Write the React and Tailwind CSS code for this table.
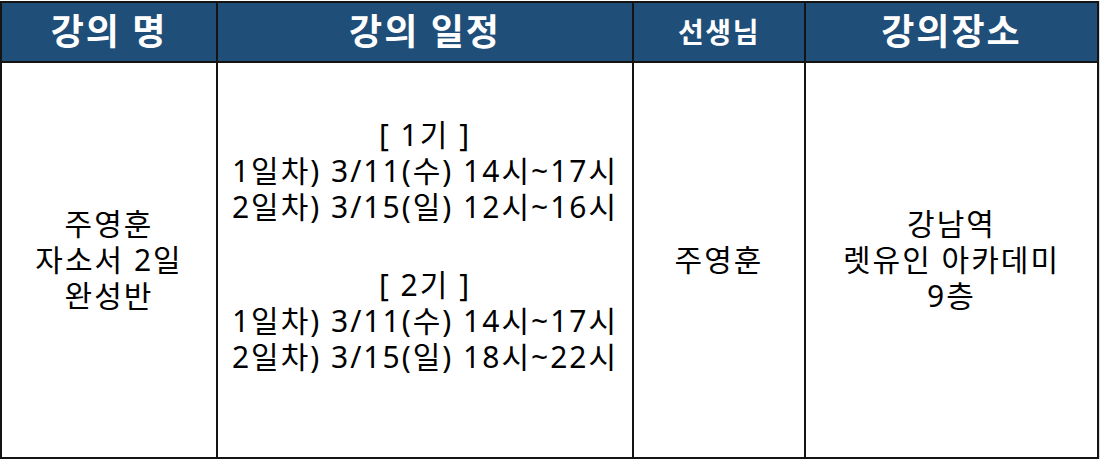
import React from 'react'

const FONT = { fontFamily: '"Noto Sans", "Noto Sans CJK KR", sans-serif' }

const Head = ({ children, small }) => (
  <div className={`bg-[#1f4e79] text-white font-bold flex items-center justify-center ${small ? 'text-[28px] tracking-[1.5px]' : 'text-[36px] tracking-[2px]'}`}>
    {children}
  </div>
)

const Cell = ({ lines, className = '' }) => (
  <div className={`bg-white text-black text-[30px] tracking-[2px] leading-[36px] flex flex-col items-center justify-center text-center ${className}`}>
    {lines.map((l, i) =>
      l === '' ? <div key={i} className="h-[42px]" /> : <div key={i} className="whitespace-pre">{l}</div>
    )}
  </div>
)

export default function App() {
  return (
    <div className="w-[1100px] h-[459px] bg-[#d9d9d9]" style={FONT}>
      <div className="w-[1099px] h-[458px] bg-[#141414] p-[2px] mt-px grid grid-cols-[214px_414px_170px_1fr] grid-rows-[58px_1fr] gap-[2px]">
        <Head>강의 명</Head>
        <Head>강의 일정</Head>
        <Head small>선생님</Head>
        <Head>강의장소</Head>

        <Cell lines={['주영훈', '자소서 2일', '완성반']} />
        <Cell
          className="pb-[28px]"
          lines={[
            '[ 1기 ]',
            '1일차) 3/11(수) 14시~17시',
            '2일차) 3/15(일) 12시~16시',
            '',
            '[ 2기 ]',
            '1일차) 3/11(수) 14시~17시',
            '2일차) 3/15(일) 18시~22시',
          ]}
        />
        <Cell lines={['주영훈']} />
        <Cell lines={['강남역', '렛유인 아카데미', '9층']} />
      </div>
    </div>
  )
}
